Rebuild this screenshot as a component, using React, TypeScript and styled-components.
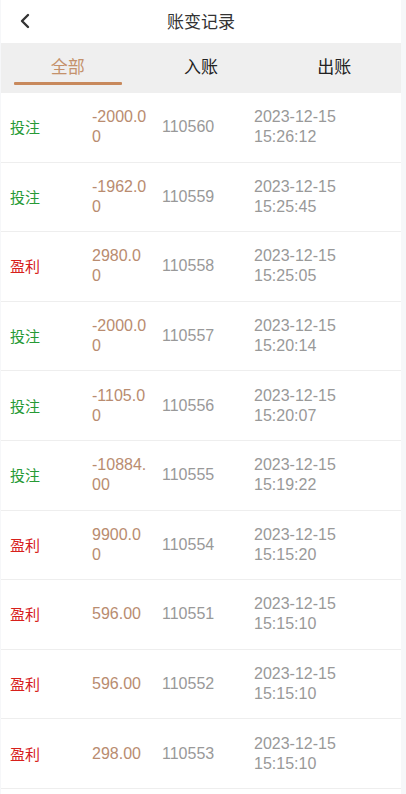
import React from "react";
import styled, { createGlobalStyle } from "styled-components";

const Global = createGlobalStyle`
  html, body { margin: 0; padding: 0; background: #f6f7f9; }
  body { font-family: "Liberation Sans", "Noto Sans CJK SC", Arial, sans-serif; }
  * { box-sizing: border-box; }
`;

const Page = styled.div`
  width: 400px;
  margin-left: 1px;
  background: #fff;
  min-height: 794px;
`;

const Header = styled.div`
  height: 43px;
  display: flex;
  align-items: center;
  justify-content: center;
  position: relative;
  background: #fff;
`;

const Back = styled.div`
  position: absolute;
  left: 16px;
  top: 12px;
  width: 16px;
  height: 18px;
  display: flex;
  align-items: center;
  justify-content: center;
`;

const Title = styled.div`
  font-family: "Noto Sans CJK SC", sans-serif;
  font-size: 17px;
  color: #333;
  margin-top: -3px;
`;

const Tabs = styled.div`
  display: flex;
  height: 50px;
  background: #efefef;
`;

const Tab = styled.div<{ $active?: boolean }>`
  flex: 1;
  display: flex;
  align-items: center;
  justify-content: center;
  position: relative;
  font-family: "Noto Sans CJK SC", sans-serif;
  font-size: 17px;
  color: ${(p) => (p.$active ? "#c4916b" : "#222")};
  padding-bottom: 6px;
`;

const Underline = styled.div`
  position: absolute;
  left: 13px;
  right: 12px;
  top: 39px;
  height: 3px;
  background: #c8895c;
  border-radius: 1px;
`;

const Row = styled.div`
  display: flex;
  align-items: center;
  height: 69.6px;
  border-bottom: 1px solid #eeeeee;
  font-size: 16px;
  line-height: 20px;
`;

const Cell = styled.div<{ $w: number; $color: string; $cjk?: boolean; $pr?: number }>`
  width: ${(p) => p.$w}px;
  flex-shrink: 0;
  padding-left: 9px;
  padding-right: ${(p) => p.$pr ?? 0}px;
  color: ${(p) => p.$color};
  word-break: break-all;
  font-family: ${(p) =>
    p.$cjk ? `"Noto Sans CJK SC", sans-serif` : `"Liberation Sans", Arial, sans-serif`};
  font-size: ${(p) => (p.$cjk ? "15px" : "16px")};
`;

type Item = { type: string; amount: string; id: string; date: string; time: string };

const items: Item[] = [
  { type: "投注", amount: "-2000.00", id: "110560", date: "2023-12-15", time: "15:26:12" },
  { type: "投注", amount: "-1962.00", id: "110559", date: "2023-12-15", time: "15:25:45" },
  { type: "盈利", amount: "2980.00", id: "110558", date: "2023-12-15", time: "15:25:05" },
  { type: "投注", amount: "-2000.00", id: "110557", date: "2023-12-15", time: "15:20:14" },
  { type: "投注", amount: "-1105.00", id: "110556", date: "2023-12-15", time: "15:20:07" },
  { type: "投注", amount: "-10884.00", id: "110555", date: "2023-12-15", time: "15:19:22" },
  { type: "盈利", amount: "9900.00", id: "110554", date: "2023-12-15", time: "15:15:20" },
  { type: "盈利", amount: "596.00", id: "110551", date: "2023-12-15", time: "15:15:10" },
  { type: "盈利", amount: "596.00", id: "110552", date: "2023-12-15", time: "15:15:10" },
  { type: "盈利", amount: "298.00", id: "110553", date: "2023-12-15", time: "15:15:10" },
];

export default function App() {
  return (
    <>
      <Global />
      <Page>
        <Header>
          <Back>
            <svg width="12" height="16" viewBox="0 0 12 16">
              <polyline points="9,2 3,8 9,14" fill="none" stroke="#333" strokeWidth="2.4" strokeLinecap="round" strokeLinejoin="round" />
            </svg>
          </Back>
          <Title>账变记录</Title>
        </Header>
        <Tabs>
          <Tab $active>
            全部
            <Underline />
          </Tab>
          <Tab>入账</Tab>
          <Tab>出账</Tab>
        </Tabs>
        {items.map((it, i) => (
          <Row key={i}>
            <Cell $w={82} $cjk $color={it.type === "投注" ? "#279a35" : "#d7201c"}>
              {it.type}
            </Cell>
            <Cell $w={70} $pr={5} $color="#b98c70">{it.amount}</Cell>
            <Cell $w={92} $color="#999">{it.id}</Cell>
            <Cell $w={156} $color="#999">
              {it.date}
              <br />
              {it.time}
            </Cell>
          </Row>
        ))}
      </Page>
    </>
  );
}
